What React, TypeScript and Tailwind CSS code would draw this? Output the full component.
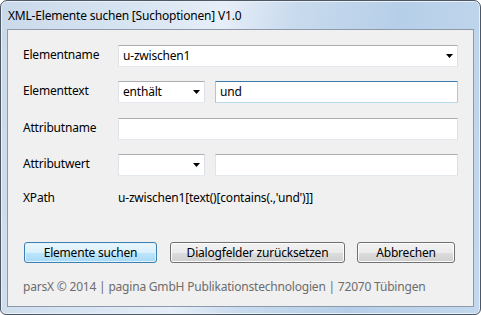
import React from "react";

const font = { fontFamily: '"Segoe UI", "Noto Sans", "Open Sans", sans-serif' };

function Arrow() {
  return (
    <svg width="7" height="4" viewBox="0 0 7 4" className="shrink-0">
      <path d="M0 0H7L3.5 4Z" fill="#000" />
    </svg>
  );
}

function Box({
  w,
  text,
  focus,
  arrow,
}: {
  w: string;
  text?: string;
  focus?: boolean;
  arrow?: boolean;
}) {
  const border = focus
    ? "border-t-[#3d7bad] border-l-[#a4c9e3] border-r-[#a4c9e3] border-b-[#b7d9ed]"
    : "border-t-[#abadb3] border-l-[#e2e3ea] border-r-[#dbdfe6] border-b-[#e3e9ef]";
  return (
    <div
      className={`${w} h-[22px] bg-white border ${border} flex items-center pl-[4px] pr-[4px] text-[12px] text-black rounded-[1px]`}
    >
      <span className="flex-1 leading-none whitespace-nowrap">{text}</span>
      {arrow && <Arrow />}
    </div>
  );
}

function Btn({ w, label, def }: { w: string; label: string; def?: boolean }) {
  const cls = def
    ? "border-[#3c7fb1] bg-[linear-gradient(#eaf6fd_0%,#d9f0fc_50%,#bee6fd_51%,#a7d9f5_100%)] shadow-[inset_0_0_0_1px_#dff2fd]"
    : "border-[#707070] bg-[linear-gradient(#f2f2f2_0%,#ebebeb_50%,#dddddd_51%,#cfcfcf_100%)] shadow-[inset_0_0_0_1px_#fcfcfc]";
  return (
    <div
      className={`${w} h-[21px] border rounded-[3px] ${cls} flex items-center justify-center text-[12px] text-black leading-none`}
    >
      {label}
    </div>
  );
}

export default function App() {
  return (
    <div
      style={font}
      className="w-[481px] h-[315px] flex flex-col tracking-[-0.2px] rounded-t-[7px] rounded-b-[6px] border border-[#4d5864] bg-[linear-gradient(100deg,#cad9ea_0%,#d7e4f2_25%,#e6eef8_42%,#c9dbee_55%,#b6cfe8_75%,#c3d8ee_100%)] shadow-[inset_0_0_0_1px_#e8f0f8]"
    >
      <div className="h-[28px] pl-[7px] pt-[1px] flex items-center text-[12px] text-black leading-none whitespace-nowrap">
        XML-Elemente suchen [Suchoptionen] V1.0
      </div>
      <div className="mx-[6px] mb-[7px] flex-1 border border-[#8c9aab] bg-[#f0f0f0] flex flex-col pl-[15px] pt-[15px] text-[12px] text-black">
        <div className="flex items-center">
          <div className="w-[95px] leading-none -mt-[2px]">Elementname</div>
          <Box w="w-[340px]" text="u-zwischen1" arrow />
        </div>
        <div className="flex items-center mt-[14px]">
          <div className="w-[95px] leading-none -mt-[3px]">Elementtext</div>
          <Box w="w-[87px]" text="enthält" arrow />
          <div className="w-[10px]" />
          <Box w="w-[243px]" text="und" focus />
        </div>
        <div className="flex items-center mt-[15px]">
          <div className="w-[95px] leading-none -mt-[3px]">Attributname</div>
          <Box w="w-[340px]" />
        </div>
        <div className="flex items-center mt-[14px]">
          <div className="w-[95px] leading-none -mt-[3px]">Attributwert</div>
          <Box w="w-[87px]" arrow />
          <div className="w-[10px]" />
          <Box w="w-[243px]" />
        </div>
        <div className="flex items-center mt-[11px] h-[22px]">
          <div className="w-[95px] leading-none">XPath</div>
          <div className="leading-none whitespace-nowrap">
            u-zwischen1[text()[contains(.,'und')]]
          </div>
        </div>
        <div className="flex mt-[33px] pl-[1px]">
          <Btn w="w-[133px]" label="Elemente suchen" def />
          <div className="w-[13px]" />
          <Btn w="w-[175px]" label="Dialogfelder zurücksetzen" />
          <div className="w-[12px]" />
          <Btn w="w-[98px]" label="Abbrechen" />
        </div>
        <div className="mt-[16px] h-[16px] flex items-center text-[#6d6d6d] leading-none whitespace-nowrap">
          parsX © 2014 | pagina GmbH Publikationstechnologien | 72070 Tübingen
        </div>
      </div>
    </div>
  );
}
